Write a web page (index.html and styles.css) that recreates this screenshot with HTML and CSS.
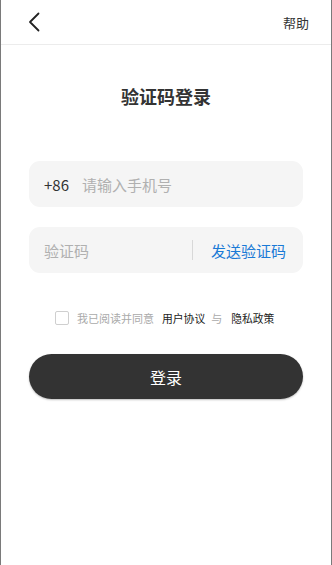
FILE: index.html
```html
<!DOCTYPE html>
<html lang="zh">
<head>
<meta charset="utf-8">
<link rel="stylesheet" href="styles.css">
</head>
<body>
<div class="page">
  <header class="topbar">
    <svg class="back" width="12" height="20" viewBox="0 0 12 20"><path d="M10.5 1.5 L2 10 L10.5 18.5" fill="none" stroke="#222" stroke-width="1.8" stroke-linecap="round" stroke-linejoin="round"/></svg>
    <span class="help">帮助</span>
  </header>
  <main class="content">
    <h1 class="title">验证码登录</h1>
    <div class="field">
      <span class="prefix">+86</span>
      <span class="placeholder">请输入手机号</span>
    </div>
    <div class="field field-code">
      <span class="placeholder grow">验证码</span>
      <span class="divider"></span>
      <span class="send">发送验证码</span>
    </div>
    <div class="agree">
      <span class="checkbox"></span>
      <span class="muted">我已阅读并同意</span>
      <span class="link link-first">用户协议</span>
      <span class="muted">与</span>
      <span class="link link-last">隐私政策</span>
    </div>
    <button class="login">登录</button>
  </main>
</div>
</body>
</html>
```

FILE: styles.css
```css
* { box-sizing: border-box; }
html, body { margin: 0; padding: 0; }
body {
  font-family: "Noto Sans CJK SC", "Noto Sans", sans-serif;
  background: #fff;
  color: #333;
}
.page {
  width: 332px;
  height: 565px;
  border-left: 1px solid #7a7a7a;
  border-right: 1px solid #7a7a7a;
  background: #fff;
}
.topbar {
  height: 45px;
  border-bottom: 1px solid #ececec;
  display: flex;
  align-items: center;
  justify-content: space-between;
  padding: 0 22px 0 27px;
}
.back { display: block; margin-top: -1px; }
.help { font-size: 13px; color: #333; }
.content {
  padding: 0 28px 0 28px;
  display: flex;
  flex-direction: column;
}
.title {
  margin: 36px 0 0 0;
  height: 30px;
  line-height: 30px;
  font-size: 18px;
  font-weight: 700;
  text-align: center;
  color: #333;
}
.field {
  margin-top: 50px;
  height: 46px;
  background: #f5f5f5;
  border-radius: 11px;
  display: flex;
  align-items: center;
  padding: 0 17px 0 15px;
  font-size: 15px;
}
.field-code { margin-top: 20px; }
.prefix { color: #333; margin-right: 13px; }
.placeholder { color: #b0b0b0; }
.grow { flex: 1; }
.divider {
  width: 1px;
  height: 20px;
  background: #d8d8d8;
  margin-right: 18px;
}
.send { color: #1a7ad6; }
.agree {
  margin-top: 37px;
  display: flex;
  align-items: center;
  padding-left: 26px;
  font-size: 11px;
  height: 16px;
}
.checkbox {
  width: 14px;
  height: 14px;
  border: 1px solid #cfcfcf;
  border-radius: 2px;
  margin-right: 8px;
}
.muted { color: #aaa; }
.link { color: #222; font-size: 10.8px; }
.link-first { margin: 0 6px 0 8px; }
.link-last { margin-left: 9px; }
.login {
  margin-top: 28px;
  height: 45px;
  border: none;
  border-radius: 23px;
  background: #333;
  color: #fff;
  font-family: inherit;
  font-size: 16px;
  box-shadow: 0 1px 2px rgba(0,0,0,0.25);
}
```
